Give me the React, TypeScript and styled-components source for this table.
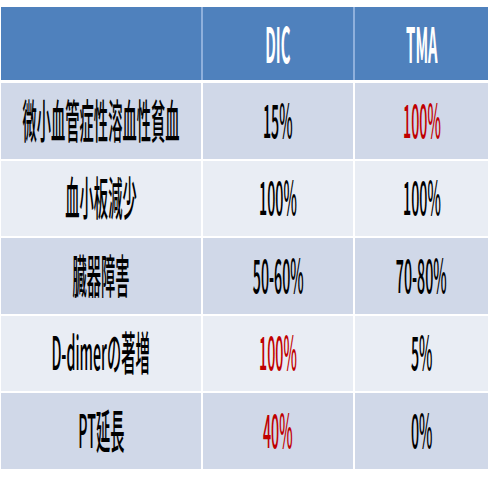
import React from "react";
import styled, { createGlobalStyle } from "styled-components";

const GlobalStyle = createGlobalStyle`
  html, body {
    margin: 0;
    padding: 0;
    background: #ffffff;
    overflow: hidden;
  }
`;

const Page = styled.div`
  width: 490px;
  height: 490px;
  padding: 7px 2px 0 1px;
  box-sizing: border-box;
  display: flex;
  flex-direction: column;
  gap: 3px;
  font-family: "Noto Sans CJK JP", "Noto Sans", sans-serif;
`;

const HeaderRow = styled.div`
  display: grid;
  grid-template-columns: 200px 150px minmax(0, 1fr);
  column-gap: 2px;
  height: 73px;
  background: #8fb0dc;
`;

const Body = styled.div`
  display: grid;
  grid-template-columns: 200px 150px minmax(0, 1fr);
  grid-auto-rows: 75.5px;
  gap: 2px;
  background: #ffffff;
`;

const HeadCell = styled.div`
  background: #4f81bd;
  display: flex;
  align-items: center;
  justify-content: center;
  padding-bottom: 3px;
  overflow: hidden;
  min-width: 0;
`;

const Cell = styled.div<{ $odd: boolean }>`
  background: ${(p) => (p.$odd ? "#d0d8e8" : "#e9edf4")};
  display: flex;
  align-items: center;
  justify-content: center;
  padding-bottom: 6px;
  overflow: hidden;
  min-width: 0;
`;

const Label = styled.span<{ $red?: boolean; $head?: boolean }>`
  display: inline-block;
  flex: none;
  white-space: nowrap;
  font-size: ${(p) => (p.$head ? "48px" : "46px")};
  font-weight: ${(p) => (p.$head ? 700 : 500)};
  line-height: 1;
  color: ${(p) => (p.$head ? "#ffffff" : p.$red ? "#c00000" : "#000000")};
  transform: scaleX(0.31);
  transform-origin: center;
`;

type Value = { text: string; red?: boolean };

const rows: { name: string; dic: Value; tma: Value }[] = [
  { name: "微小血管症性溶血性貧血", dic: { text: "15%" }, tma: { text: "100%", red: true } },
  { name: "血小板減少", dic: { text: "100%" }, tma: { text: "100%" } },
  { name: "臓器障害", dic: { text: "50-60%" }, tma: { text: "70-80%" } },
  { name: "D-dimerの著増", dic: { text: "100%", red: true }, tma: { text: "5%" } },
  { name: "PT延長", dic: { text: "40%", red: true }, tma: { text: "0%" } },
];

const App: React.FC = () => {
  return (
    <>
      <GlobalStyle />
      <Page>
        <HeaderRow>
          <HeadCell />
          <HeadCell>
            <Label $head>DIC</Label>
          </HeadCell>
          <HeadCell>
            <Label $head>TMA</Label>
          </HeadCell>
        </HeaderRow>
        <Body>
          {rows.map((r, i) => (
            <React.Fragment key={r.name}>
              <Cell $odd={i % 2 === 0}>
                <Label>{r.name}</Label>
              </Cell>
              <Cell $odd={i % 2 === 0}>
                <Label $red={r.dic.red}>{r.dic.text}</Label>
              </Cell>
              <Cell $odd={i % 2 === 0}>
                <Label $red={r.tma.red}>{r.tma.text}</Label>
              </Cell>
            </React.Fragment>
          ))}
        </Body>
      </Page>
    </>
  );
};

export default App;
